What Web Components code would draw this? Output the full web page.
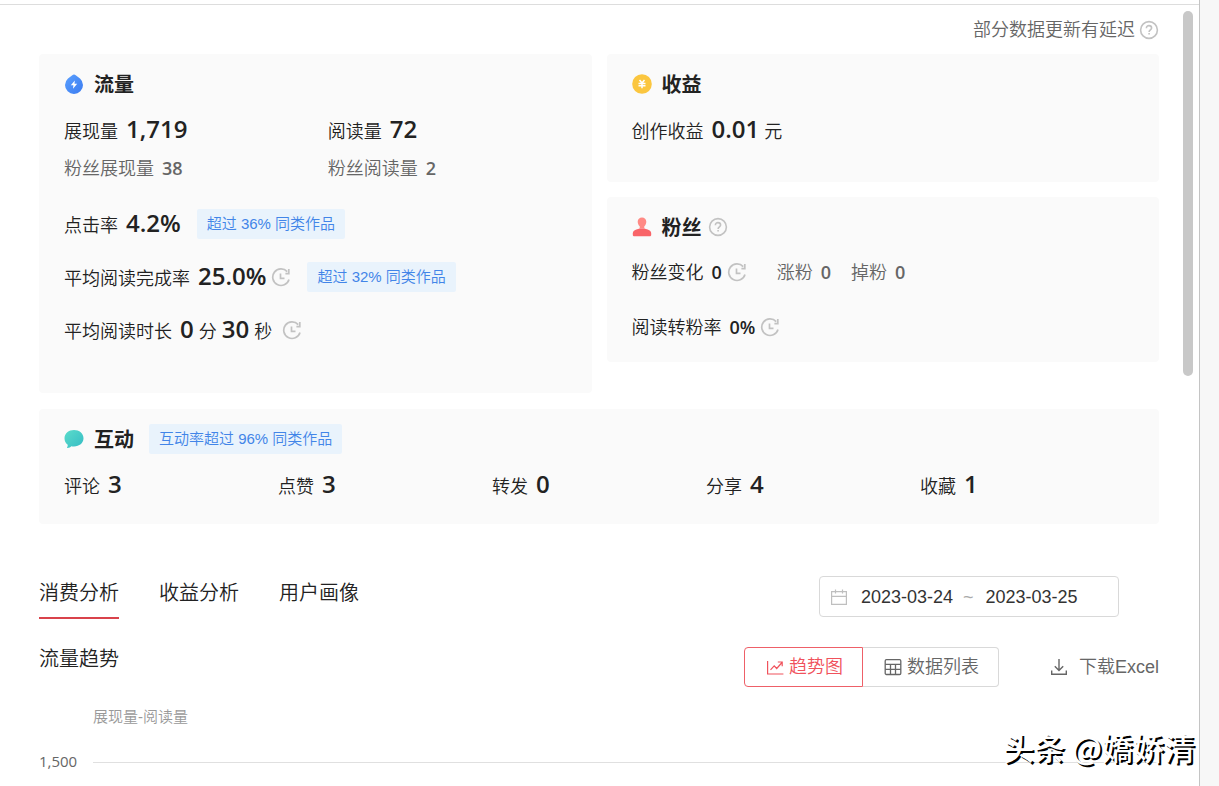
<!DOCTYPE html>
<html lang="zh-CN">
<head>
<meta charset="utf-8">
<title>作品数据</title>
<style>
  html, body { margin: 0; }
  body {
    --ink: #222; --muted: #666; --faint: #999; --line: #e0e0e0; --text-weight: 350;
    --num: "Open Sans", "Noto Sans", sans-serif;
    font: 18px/24px "Liberation Sans", "Noto Sans CJK SC", sans-serif;
    color: var(--ink); background: #fff;
  }
</style>
</head>
<body>
<app-shell>
  <delay-note>部分数据更新有延迟</delay-note>
  <card-board>
    <data-card slot="traffic" heading="流量" icon="drop">
      <metric-grid>
        <metric-row label="展现量" value="1,719"></metric-row>
        <metric-row label="阅读量" value="72"></metric-row>
        <metric-row class="sub" kind="sub" label="粉丝展现量" value="38"></metric-row>
        <metric-row class="sub" kind="sub" label="粉丝阅读量" value="2"></metric-row>
      </metric-grid>
      <metric-stack>
        <metric-row label="点击率" value="4.2%"><tip-tag>超过 36% 同类作品</tip-tag></metric-row>
        <metric-row label="平均阅读完成率" value="25.0%"><ui-icon name="clock"></ui-icon><tip-tag>超过 32% 同类作品</tip-tag></metric-row>
        <metric-row label="平均阅读时长" value="0" unit="分" value2="30" unit2="秒"><ui-icon name="clock"></ui-icon></metric-row>
      </metric-stack>
    </data-card>
    <data-card slot="income" heading="收益" icon="coin">
      <metric-row label="创作收益" value="0.01" unit="元"></metric-row>
    </data-card>
    <data-card slot="fans" heading="粉丝" icon="user">
      <ui-icon slot="extra" name="help"></ui-icon>
      <fans-rows>
        <metric-row kind="small" label="粉丝变化" value="0"><ui-icon name="clock"></ui-icon></metric-row>
        <metric-row kind="sub" label="涨粉" value="0"></metric-row>
        <metric-row kind="sub" label="掉粉" value="0"></metric-row>
        <metric-row slot="rate" kind="small" label="阅读转粉率" value="0%"><ui-icon name="clock"></ui-icon></metric-row>
      </fans-rows>
    </data-card>
    <data-card slot="interact" heading="互动" icon="bubble">
      <tip-tag slot="extra">互动率超过 96% 同类作品</tip-tag>
      <metric-grid cols="5">
        <metric-row label="评论" value="3"></metric-row>
        <metric-row label="点赞" value="3"></metric-row>
        <metric-row label="转发" value="0"></metric-row>
        <metric-row label="分享" value="4"></metric-row>
        <metric-row label="收藏" value="1"></metric-row>
      </metric-grid>
    </data-card>
  </card-board>
  <analysis-bar></analysis-bar>
  <trend-section></trend-section>
  <author-mark slot="mark">头条 @嬌娇清</author-mark>
</app-shell>

<script>
const define = (name, render) => customElements.define(name, class extends HTMLElement {
  constructor() {
    super();
    this.attachShadow({ mode: 'open' });
  }
  connectedCallback() {
    const t = document.createElement('template');
    t.innerHTML = render(this);
    this.shadowRoot.replaceChildren(t.content.cloneNode(true));
  }
});

const ICONS = {
  drop: `<svg viewBox="0 0 20 20"><defs><linearGradient id="g" x2="1" y2="1"><stop stop-color="#5aa0ff"/><stop offset="1" stop-color="#3b7bf0"/></linearGradient></defs><path fill="url(#g)" d="M10 .4c.7 0 1.200.3 1.700.8l4.300 3.300A9 9 0 0 1 19 11a9 9 0 0 1-18 0 9 9 0 0 1 3-6.500l4.300-3.300c.5-.5 1-.8 1.700-.8z"/><path fill="#fff" d="M10.800 6.500 6.800 11.200h2.600l-.4 3.500 4.200-4.900h-2.700z"/></svg>`,
  coin: `<svg viewBox="0 0 20 20"><circle cx="10" cy="10" r="9.800" fill="#fbc63f"/><path d="m7.500 6 2.500 3 2.500-3M6.500 9.500h7M6.500 11.800h7M10 9v5.200" fill="none" stroke="#fff" stroke-width="1.500"/></svg>`,
  user: `<svg viewBox="0 0 20 20"><path fill="#ff8a85" d="M10 .5c2.500 0 4.300 1.800 4.300 4.300 0 1.800-.8 3.500-2 4.500v2.200H7.700V9.300c-1.200-1-2-2.700-2-4.500C5.700 2.300 7.500.5 10 .5z"/><path fill="#f96468" d="M7.500 11.500h5c3.500 1 6.700 2 6.700 5v1.300c0 1-.7 1.500-1.700 1.500h-15c-1 0-1.700-.5-1.700-1.500v-1.300c0-3 3.200-4 6.700-5z"/></svg>`,
  bubble: `<svg viewBox="0 0 20 20"><defs><linearGradient id="g" x2="1" y2="1"><stop stop-color="#5bdccb"/><stop offset="1" stop-color="#35bcc4"/></linearGradient></defs><path fill="url(#g)" d="M10 1c5.300 0 9.500 3.500 9.500 8.300S15.300 17.500 10 17.500c-1 0-2-.1-2.800-.3-.8.900-2 1.700-3.700 1.800-.5 0-.6-.4-.3-.7.5-.7.6-1.600.5-2.500C1.700 14.300.5 12 .5 9.300.5 4.500 4.700 1 10 1z"/></svg>`,
  help: `<svg viewBox="0 0 20 20" fill="none" stroke="#c2c2c2" stroke-width="1.600"><circle cx="10" cy="10" r="8.400"/><path d="M7.400 8.200C7.400 6.600 8.500 5.600 10 5.600s2.600 1 2.600 2.400c0 1.800-2.500 2-2.500 4M10.100 13v1.600"/></svg>`,
  clock: `<svg viewBox="0 0 20 20" fill="none" stroke="#c2c2c2" stroke-width="1.700"><path d="M18 12.500A8.300 8.300 0 1 1 16.200 4.600M17.800 2v4.600h-3.400"/><path d="M9.500 6.500v4.800h4"/></svg>`,
  calendar: `<svg viewBox="0 0 20 20" fill="none" stroke="#bfbfbf" stroke-width="1.200"><path d="M2.600 4.600h14.800v12.800H2.600zM2.600 9.400h14.800M6.500 2.400v4M13.500 2.400v4"/></svg>`,
  trend: `<svg viewBox="0 0 20 20" fill="none" stroke="#f0525c" stroke-width="1.200"><path d="M2.600 4v13h15.800M5.500 12.800l3.700-4 2.500 2.700 5.300-6M12.800 5h4.400v4.300"/></svg>`,
  table: `<svg viewBox="0 0 20 20" fill="none" stroke="#666" stroke-width="1.300"><rect x="2.200" y="2.700" width="15.600" height="14.800" rx="1.200"/><path d="M2.200 7.300h15.600M2.200 12.400h15.600M7.500 7.300v10.200M12.500 7.300v10.200"/></svg>`,
  download: `<svg viewBox="0 0 20 20" fill="none" stroke="#666" stroke-width="1.400"><path d="M10 2v11.200M5.800 9.200l4.200 4.200 4.200-4.200M2.700 13.600v3.700h14.600v-3.700"/></svg>`
};

define('ui-icon', el => `<style>
  :host { display: block; flex: none; width: 20px; height: 20px; }
  svg { display: block; width: 100%; height: 100%; }
</style>${ICONS[el.getAttribute('name')]}`);

define('tip-tag', () => `<style>
  :host { display: block; flex: none; padding: 0 10px; font-size: 15px; line-height: 30px;
    font-weight: var(--text-weight); color: #4285e8; background: #e9f3fc; border-radius: 2px; white-space: nowrap; }
</style><slot></slot>`);

define('metric-row', el => {
  const a = n => el.getAttribute(n);
  const pair = (v, u) => v ? `<b>${v}</b>${u ? `<i>${u}</i>` : ''}` : '';
  return `<style>
    :host { display: flex; align-items: baseline; height: 36px; white-space: nowrap; }
    span { font-weight: var(--text-weight); margin-right: 8px; }
    b { font: 600 24px/36px var(--num); }
    i { font-style: normal; font-weight: var(--text-weight); margin: 0 5px; }
    ::slotted(*) { align-self: center; }
    ::slotted(ui-icon) { margin: 2px 0 0 5px; }
    ::slotted(tip-tag) { margin: 2px 0 0 16px; }
    :host([kind]) b { font-size: 18px; }
    :host([kind=sub]) { color: var(--muted); }
    :host([kind=small]) ::slotted(ui-icon) { margin-top: 0; }
  </style><span>${a('label')}</span>${pair(a('value'), a('unit'))}${pair(a('value2'), a('unit2'))}<slot></slot>`;
});

define('metric-grid', () => `<style>
  :host { display: grid; grid-template-columns: 21fr 19fr; row-gap: 3px; }
  :host([cols="5"]) { grid-template-columns: repeat(5, 1fr); }
</style><slot></slot>`);

define('metric-stack', () => `<style>
  :host { display: grid; row-gap: 17px; margin-top: 19px; }
</style><slot></slot>`);

define('fans-rows', () => `<style>
  :host { display: grid; row-gap: 19px; }
  div { display: flex; gap: 20px; }
  ::slotted(metric-row:first-of-type) { margin-right: 10px; }
</style><div><slot></slot></div><slot name="rate"></slot>`);

define('data-card', el => `<style>
  :host { display: block; box-sizing: border-box; padding: 15px 25px 0; background: #fafafa; border-radius: 4px; }
  header { display: flex; align-items: center; height: 30px; margin-bottom: 12px; }
  h2 { margin: 1px 6px 0 10px; font-size: 20px; line-height: 30px; font-weight: 700; }
  ::slotted(tip-tag) { margin-left: 9px; }
</style>
<header><ui-icon name="${el.getAttribute('icon')}"></ui-icon><h2>${el.getAttribute('heading')}</h2><slot name="extra"></slot></header>
<slot></slot>`);

define('card-board', () => `<style>
  :host { display: grid; grid-template-columns: 1fr 1fr; column-gap: 15px; row-gap: 16px; }
  .side { display: flex; flex-direction: column; gap: 15px; }
  .wide { grid-column: 1 / -1; }
  slot { display: grid; }
  ::slotted([slot=traffic]) { padding-bottom: 46px; }
  ::slotted([slot=income]) { padding-bottom: 35px; }
  ::slotted([slot=fans]) { padding-bottom: 17px; }
  ::slotted([slot=interact]) { padding-bottom: 22px; }
</style>
<slot name="traffic"></slot>
<div class="side"><slot name="income"></slot><slot name="fans"></slot></div>
<slot name="interact" class="wide"></slot>`);

define('delay-note', () => `<style>
  :host { display: flex; justify-content: flex-end; align-items: center; gap: 4px;
    height: 48px; font-weight: var(--text-weight); color: var(--muted); }
</style><slot></slot><ui-icon name="help"></ui-icon>`);

define('analysis-bar', () => `<style>
  :host { display: flex; justify-content: space-between; align-items: flex-start; margin: 52px 40px 0 0; }
  nav { display: flex; gap: 40px; }
  a { font-size: 20px; line-height: 34px; padding-bottom: 7px; border-bottom: 2px solid transparent;
    color: inherit; font-weight: var(--text-weight); text-decoration: none; }
  a[aria-current] { border-color: #d9434b; }
  .range { display: flex; align-items: center; box-sizing: border-box; width: 300px; height: 41px;
    padding: 0 9px; border: 1px solid #d9d9d9; border-radius: 4px; color: #aaa; }
  input { width: 94px; border: 0; padding: 0; margin: 0 8px 0 12px; background: none; font: inherit; color: #333; outline: 0; }
</style>
<nav><a href="#consume" aria-current="page">消费分析</a><a href="#income">收益分析</a><a href="#users">用户画像</a></nav>
<div class="range"><ui-icon name="calendar"></ui-icon><input type="text" value="2023-03-24" aria-label="开始日期"><span>~</span><input type="text" value="2023-03-25" aria-label="结束日期"></div>`);

define('trend-section', () => `<style>
  :host { display: block; margin-top: 28px; }
  header { display: flex; align-items: flex-start; }
  h3 { margin: 0 auto 0 0; font-size: 20px; font-weight: var(--text-weight); }
  button { display: flex; align-items: center; gap: 4px; height: 40px; box-sizing: border-box; margin: 0;
    padding: 0 19px 0 20px; font: inherit; font-weight: var(--text-weight); color: var(--muted); background: #fff;
    border: 1px solid #d9d9d9; white-space: nowrap; }
  .on { color: #f0525c; border-color: #ee6068; border-radius: 4px 0 0 4px; }
  .list { border-left: 0; border-radius: 0 4px 4px 0; }
  .get { gap: 10px; margin-left: 50px; padding: 0; border: 0; }
  p { margin: 18px 0 0 54px; font-size: 15px; font-weight: var(--text-weight); color: var(--faint); }
  .axis { display: flex; align-items: center; margin-top: 20px; }
  .axis span { width: 54px; font: 15px/24px var(--num); color: var(--muted); }
  .axis hr { flex: 1; margin: 3px 0 0; border: 0; border-top: 1px solid var(--line); }
</style>
<header><h3>流量趋势</h3>
<button type="button" class="on"><ui-icon name="trend"></ui-icon>趋势图</button>
<button type="button" class="list"><ui-icon name="table"></ui-icon>数据列表</button>
<button type="button" class="get"><ui-icon name="download"></ui-icon>下载Excel</button></header>
<p>展现量-阅读量</p>
<div class="axis"><span>1,500</span><hr></div>`);

define('author-mark', () => `<style>
  :host { position: absolute; right: 4px; bottom: 21px; font: 500 31px/36px "Noto Sans CJK SC", sans-serif;
    color: #fff; text-shadow: 2px 2px 0 #000; white-space: nowrap; }
</style><slot></slot>`);

define('app-shell', () => `<style>
  :host { display: flex; min-height: 100vh; }
  main { position: relative; flex: 1; min-width: 0; box-sizing: border-box;
    padding: 2px 40px 10px 39px; border-right: 1px solid #c4c4c4; }
  .top { margin: 2px -40px 1px -39px; border-top: 1px solid #ddd; }
  aside { width: 19px; background: #f7f7f7; }
  .thumb { position: absolute; right: 6px; top: 11px; width: 10px; height: 365px; border-radius: 5px; background: #c8c8c8; }
</style>
<main><div class="top"></div><slot></slot><div class="thumb"></div><slot name="mark"></slot></main><aside></aside>`);
</script>
</body>
</html>
